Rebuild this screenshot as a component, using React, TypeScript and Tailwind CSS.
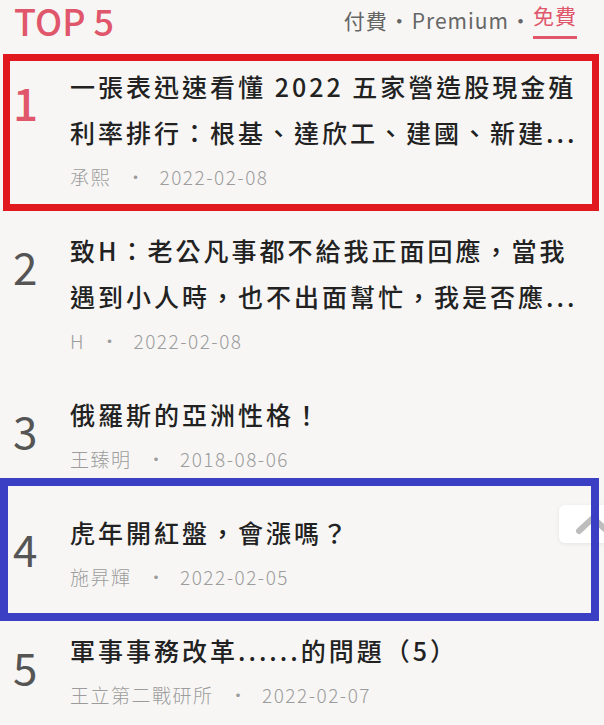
import React from 'react';

type Item = {
  rank: number;
  title: string;
  author: string;
  date: string;
};

const items: Item[] = [
  {
    rank: 1,
    title: '一張表迅速看懂 2022 五家營造股現金殖利率排行：根基、達欣工、建國、新建...',
    author: '承熙',
    date: '2022-02-08',
  },
  {
    rank: 2,
    title: '致H：老公凡事都不給我正面回應，當我遇到小人時，也不出面幫忙，我是否應...',
    author: 'H',
    date: '2022-02-08',
  },
  { rank: 3, title: '俄羅斯的亞洲性格！', author: '王臻明', date: '2018-08-06' },
  { rank: 4, title: '虎年開紅盤，會漲嗎？', author: '施昇輝', date: '2022-02-05' },
  { rank: 5, title: '軍事事務改革......的問題（5）', author: '王立第二戰研所', date: '2022-02-07' },
];

const font = { fontFamily: '"Noto Sans CJK TC", "Noto Sans", sans-serif' };

function Row({ item }: { item: Item }) {
  return (
    <div className="flex">
      <div
        className={
          'w-[70px] shrink-0 pl-[13px] pt-[17px] text-[44px] leading-none ' +
          (item.rank === 1 ? 'text-[#e0566b] font-medium' : 'text-[#555555]')
        }
      >
        {item.rank}
      </div>
      <div className="flex-1 pr-[18px]">
        <h3 className="text-[25px] leading-[46px] tracking-[3px] font-medium text-[#222222]">
          {item.title}
        </h3>
        <div className="mt-[7px] flex items-center text-[19px] leading-[30px] tracking-[1.5px] font-light text-[#9c9c9c]">
          <span>{item.author}</span>
          <span className="ml-[15px] mr-[13px]">·</span>
          <span>{item.date}</span>
        </div>
      </div>
    </div>
  );
}

export default function App() {
  return (
    <div className="relative w-[604px] h-[725px] overflow-hidden bg-[#f7f6f5]" style={font}>
      <header className="flex items-start justify-between pl-[14px] pr-[27px] h-[63px]">
        <h1 className="-mt-[2px] text-[36px] leading-[44px] font-medium text-[#e0566b]">TOP 5</h1>
        <nav className="flex items-center text-[21px] leading-[30px] tracking-[1px] text-[#666666]">
          <span>付費</span>
          <span className="mx-[1px]">·</span>
          <span>Premium</span>
          <span className="mx-[1px]">·</span>
          <span className="text-[#e0566b] border-b-[3px] border-[#e0566b] pb-[6px]">免費</span>
        </nav>
      </header>

      <div className="flex flex-col gap-[35px]">
        {items.map((item) => (
          <Row key={item.rank} item={item} />
        ))}
      </div>

      {/* scroll to top button */}
      <div className="absolute left-[559px] top-[505px] w-[56px] h-[38px] rounded-[6px] bg-white shadow-[0_1px_4px_rgba(0,0,0,0.08)]">
        <svg className="absolute left-[16px] top-[6px]" width="34" height="24" viewBox="0 0 34 24">
          <path d="M4 20 L18 7 L32 20" fill="none" stroke="#bdbdbd" strokeWidth="6" strokeLinecap="round" strokeLinejoin="round" />
        </svg>
      </div>

      {/* highlight boxes */}
      <div className="absolute left-[3px] top-[54px] w-[596px] h-[157px] border-[7px] border-[#e1191f] pointer-events-none" />
      <div className="absolute left-0 top-[478px] w-[599px] h-[143px] border-[8px] border-[#3b3fc4] pointer-events-none" />
    </div>
  );
}
